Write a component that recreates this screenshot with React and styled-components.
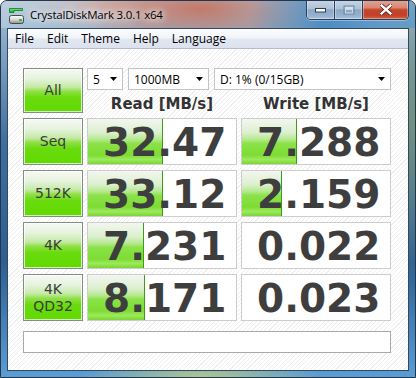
import React from 'react';
import styled, { createGlobalStyle } from 'styled-components';

const Global = createGlobalStyle`
  html, body { margin: 0; padding: 0; width: 416px; height: 378px; overflow: hidden; background: #fff; }
  body { font-family: "Open Sans", "Noto Sans", sans-serif; }
`;

const Window = styled.div`
  box-sizing: border-box;
  width: 416px;
  height: 378px;
  display: flex;
  flex-direction: column;
  border: 1px solid #23364c;
  border-radius: 7px 7px 0 0;
  overflow: hidden;
  background:
    radial-gradient(ellipse 130px 40px at 200px 8px, rgba(196, 118, 100, 0.95), rgba(196, 118, 100, 0) 100%),
    radial-gradient(ellipse 90px 30px at 110px 4px, rgba(214, 170, 160, 0.9), rgba(214, 170, 160, 0) 100%),
    radial-gradient(ellipse 40px 160px at 416px 120px, rgba(120, 150, 120, 0.95), rgba(120, 150, 120, 0) 100%),
    radial-gradient(ellipse 120px 30px at 200px 378px, rgba(180, 200, 140, 1), rgba(180, 200, 140, 0) 100%),
    linear-gradient(to bottom, #b3c6d6 0px, #8fb0cc 30px, #3f6f9f 140px, #2c5e92 260px, #5c9ed4 378px);
`;

const TitleBar = styled.div`
  height: 27px;
  display: flex;
  align-items: flex-start;
  padding-left: 7px;
  padding-right: 6px;
  background: linear-gradient(to right, rgba(200, 215, 228, 0.5) 0%, rgba(200, 215, 228, 0) 35%, rgba(60, 130, 190, 0) 60%, rgba(60, 130, 190, 0.8) 78%, rgba(80, 150, 205, 0.6) 100%);
`;

const AppIcon = styled.svg`
  width: 17px;
  height: 18px;
  margin-top: 6px;
  flex: none;
`;

const Title = styled.div`
  margin-left: 5px;
  margin-top: 6px;
  font-family: "Open Sans", "Noto Sans", sans-serif;
  font-size: 11.5px;
  letter-spacing: -0.2px;
  color: #000;
  line-height: 16px;
  text-shadow: 0 0 6px rgba(255, 255, 255, 0.95), 0 0 10px rgba(255, 255, 255, 0.8), 0 0 14px rgba(255, 255, 255, 0.6);
  flex: 1;
`;

const CaptionGroup = styled.div`
  display: flex;
  height: 19px;
  margin-top: -1px;
  border: 1px solid #2b3f58;
  border-top: none;
  border-radius: 0 0 5px 5px;
  overflow: hidden;
  box-shadow: 0 1px 0 rgba(255, 255, 255, 0.35);
`;

const CaptionButton = styled.div`
  width: ${p => p.$w}px;
  display: flex;
  align-items: center;
  justify-content: center;
  border-left: ${p => (p.$first ? 'none' : '1px solid #2b3f58')};
  box-shadow: inset 0 0 0 1px rgba(255, 255, 255, 0.35);
  background: ${p =>
    p.$close
      ? 'linear-gradient(to bottom, #e6a595 0%, #d78772 40%, #c4452c 52%, #c24028 80%, #d8643e 100%)'
      : 'linear-gradient(to bottom, #c6d6e5 0%, #aec3d8 45%, #8ba7c3 52%, #97b3cf 85%, #a9c5de 100%)'};
`;

const Frame = styled.div`
  flex: 1;
  display: flex;
  padding: 0 6px 6px 6px;
  min-height: 0;
`;

const Client = styled.div`
  flex: 1;
  display: flex;
  flex-direction: column;
  border: 1px solid #34495f;
  background: #fff;
  min-width: 0;
`;

const MenuBar = styled.div`
  height: 19px;
  display: flex;
  align-items: center;
  gap: 13px;
  padding-left: 7px;
  border-bottom: 1px solid #b3bdcc;
  background: linear-gradient(to bottom, #fbfcfe 0%, #f1f4f9 45%, #e1e7f1 55%, #dbe2ee 100%);
`;

const MenuItem = styled.span`
  font-family: "Open Sans", "Noto Sans", sans-serif;
  font-size: 12px;
  color: #000;
  line-height: 19px;
`;

const Content = styled.div`
  flex: 1;
  padding: 19px 0 0 15px;
  background-color: #fff;
  background-image: repeating-linear-gradient(135deg, #ffffff 0px, #ffffff 2.2px, #efefef 2.2px, #efefef 3px);
`;

const Grid = styled.div`
  display: grid;
  grid-template-columns: 60px 150px 150px;
  grid-template-rows: 22px 18px 47px 47px 47px 47px 27px;
  column-gap: 4px;
  row-gap: 5px;
`;

const GreenButton = styled.div`
  box-sizing: border-box;
  grid-row: ${p => p.$row || 'auto'};
  display: flex;
  flex-direction: column;
  align-items: center;
  justify-content: center;
  border: 1px solid #858c85;
  box-shadow: inset 0 0 0 1px rgba(255, 255, 255, 0.7);
  background: linear-gradient(to bottom, #f6f9f4 0%, #e6f3de 22%, #c4eaa6 42%, #8fe045 52%, #6adb0e 66%, #60da00 100%);
  font-family: "DejaVu Sans", "Noto Sans", sans-serif;
  font-size: 14px;
  color: #3c3c3c;
  line-height: 17px;
`;

const ComboRow = styled.div`
  grid-column: 2 / 4;
  display: flex;
  gap: 5px;
`;

const Combo = styled.div`
  box-sizing: border-box;
  width: ${p => p.$w}px;
  height: 22px;
  display: flex;
  align-items: center;
  justify-content: space-between;
  padding: 0 5px 0 5px;
  border: 1px solid #c4c4c4;
  background: #fff;
  font-family: "Open Sans", "Noto Sans", sans-serif;
  font-size: 12px;
  color: #000;
`;

const Arrow = styled.svg`
  width: 7px;
  height: 4px;
  flex: none;
`;

const Header = styled.div`
  display: flex;
  align-items: center;
  justify-content: center;
  font-family: "DejaVu Sans", sans-serif;
  font-weight: bold;
  font-size: 15px;
  color: #333;
  line-height: 18px;
`;

const ValueCell = styled.div`
  box-sizing: border-box;
  display: flex;
  align-items: center;
  padding: 3px 0 0 15px;
  border: 1px solid #cdcdcd;
  background-color: #fff;
  background-image:
    linear-gradient(#3d9b16, #3d9b16),
    linear-gradient(to bottom, #f3f6f0 0%, #dcf0cf 30%, #b4e88c 46%, #8ce24a 54%, #7ddc32 80%, #9ce85e 90%, #7ad72e 100%);
  background-repeat: no-repeat;
  background-size: ${p => (p.$fill ? '1px 100%' : '0 0')}, ${p => p.$fill}px 100%;
  background-position: ${p => p.$fill - 1}px 0, 0 0;
  font-family: "DejaVu Sans", sans-serif;
  font-weight: bold;
  font-size: 39px;
  line-height: 40px;
  color: #3e3e3e;
`;

const CommentBox = styled.div`
  grid-column: 1 / 4;
  margin-top: 5px;
  border: 1px solid #a9a9a9;
  background: #fff;
`;

const rows = [
  { label: ['Seq'], read: '32.47', rf: 75, write: '7.288', wf: 55 },
  { label: ['512K'], read: '33.12', rf: 75, write: '2.159', wf: 40 },
  { label: ['4K'], read: '7.231', rf: 56, write: '0.022', wf: 0 },
  { label: ['4K', 'QD32'], read: '8.171', rf: 57, write: '0.023', wf: 0 },
];

const DownArrow = () => (
  <Arrow viewBox="0 0 7 4">
    <path d="M0 0 H7 L3.5 4 Z" fill="#000" />
  </Arrow>
);

export default function App() {
  return (
    <>
      <Global />
      <Window>
        <TitleBar>
          <AppIcon viewBox="0 0 17 18">
            <defs>
              <linearGradient id="drv" x1="0" y1="0" x2="0" y2="1">
                <stop offset="0" stopColor="#ffffff" />
                <stop offset="0.5" stopColor="#d8d8d8" />
                <stop offset="1" stopColor="#8c8c8c" />
              </linearGradient>
              <linearGradient id="grn" x1="0" y1="0" x2="0" y2="1">
                <stop offset="0" stopColor="#6ef07a" />
                <stop offset="1" stopColor="#12a82c" />
              </linearGradient>
            </defs>
            <path d="M1.5 1.5 H14.5 V3.5 H6 V5.5 H1.5 Z" fill="url(#grn)" stroke="#0b7a20" strokeWidth="0.8" />
            <rect x="1.5" y="8.5" width="14" height="8" rx="2" fill="url(#drv)" stroke="#4a4a4a" strokeWidth="1" />
            <rect x="11" y="12" width="3" height="2" fill="#22c83a" />
          </AppIcon>
          <Title>CrystalDiskMark 3.0.1 x64</Title>
          <CaptionGroup>
            <CaptionButton $w={27} $first>
              <svg width="12" height="6" viewBox="0 0 12 6">
                <rect x="0.5" y="1.5" width="10" height="3.5" fill="#fff" stroke="#2e3f55" strokeWidth="1" />
              </svg>
            </CaptionButton>
            <CaptionButton $w={27}>
              <svg width="12" height="10" viewBox="0 0 12 10">
                <rect x="1" y="1" width="10" height="8" fill="none" stroke="#6d88a6" strokeWidth="1" />
                <rect x="2" y="2" width="8" height="2" fill="#d6e2ee" />
                <rect x="2.5" y="4.5" width="7" height="3.5" fill="none" stroke="#c9d8e6" strokeWidth="1" />
              </svg>
            </CaptionButton>
            <CaptionButton $w={45} $close>
              <svg width="12" height="11" viewBox="0 0 12 11">
                <path d="M1.5 1.5 L10.5 9.5 M10.5 1.5 L1.5 9.5" stroke="#5a1a12" strokeWidth="4" strokeLinecap="square" />
                <path d="M1.5 1.5 L10.5 9.5 M10.5 1.5 L1.5 9.5" stroke="#ffffff" strokeWidth="2.4" strokeLinecap="square" />
              </svg>
            </CaptionButton>
          </CaptionGroup>
        </TitleBar>
        <Frame>
          <Client>
            <MenuBar>
              <MenuItem>File</MenuItem>
              <MenuItem>Edit</MenuItem>
              <MenuItem>Theme</MenuItem>
              <MenuItem>Help</MenuItem>
              <MenuItem>Language</MenuItem>
            </MenuBar>
            <Content>
              <Grid>
                <GreenButton $row="1 / 3">All</GreenButton>
                <ComboRow>
                  <Combo $w={36}>
                    <span>5</span>
                    <DownArrow />
                  </Combo>
                  <Combo $w={81}>
                    <span>1000MB</span>
                    <DownArrow />
                  </Combo>
                  <Combo $w={177}>
                    <span>D: 1% (0/15GB)</span>
                    <DownArrow />
                  </Combo>
                </ComboRow>
                <Header>Read [MB/s]</Header>
                <Header>Write [MB/s]</Header>
                {rows.map(r => (
                  <React.Fragment key={r.label.join(' ')}>
                    <GreenButton>
                      {r.label.map(l => (
                        <span key={l}>{l}</span>
                      ))}
                    </GreenButton>
                    <ValueCell $fill={r.rf}>{r.read}</ValueCell>
                    <ValueCell $fill={r.wf}>{r.write}</ValueCell>
                  </React.Fragment>
                ))}
                <CommentBox />
              </Grid>
            </Content>
          </Client>
        </Frame>
      </Window>
    </>
  );
}
